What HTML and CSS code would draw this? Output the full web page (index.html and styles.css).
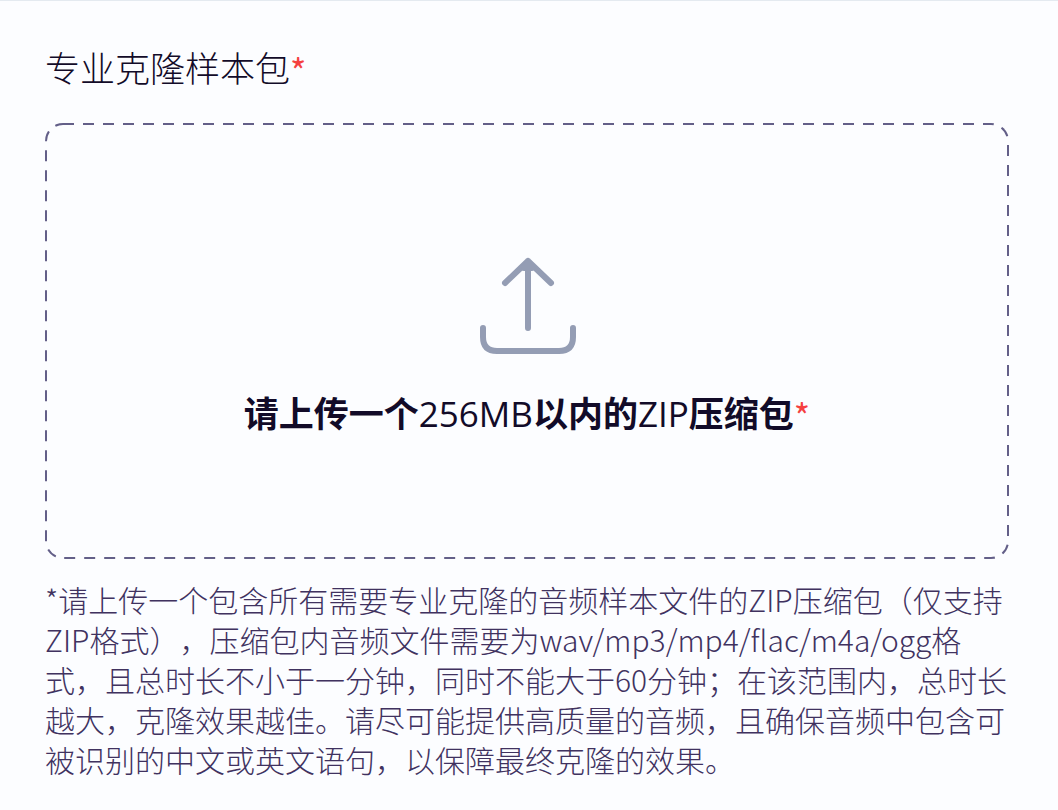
FILE: index.html
```html
<!DOCTYPE html>
<html lang="zh-CN">
<head>
  <meta charset="UTF-8">
  <meta name="viewport" content="width=device-width, initial-scale=1">
  <title>专业克隆样本包</title>
  <link rel="stylesheet" href="styles.css">
</head>
<body>
  <form class="upload-form">
    <h1 class="upload-title">专业克隆样本包<span class="required">*</span></h1>

    <input class="file-input" type="file" id="samplePack" accept=".zip" required aria-describedby="sampleHelp">
    <label class="dropzone" for="samplePack">
      <svg class="upload-icon" width="100" height="100" viewBox="0 0 100 100" fill="none" stroke-linecap="round" stroke-linejoin="round" aria-hidden="true">
        <path d="M28 27 L51 5 L74 27 M51 5 V72" />
        <path d="M6 72 V81 Q6 95 20 95 H82 Q96 95 96 81 V72" />
        <path class="tip" d="M47 12 L51 8 L55 12 Z" />
      </svg>
      <span class="dropzone-text"><b>请上传一个</b>256MB<b>以内的</b>ZIP<b>压缩包</b><span class="required">*</span></span>
    </label>

    <p class="help" id="sampleHelp">*请上传一个包含所有需要专业克隆的音频样本文件的ZIP压缩包（仅支持ZIP格式），压缩包内音频文件需要为wav/mp3/mp4/flac/m4a/ogg格式，且总时长不小于一分钟，同时不能大于60分钟；在该范围内，总时长越大，克隆效果越佳。请尽可能提供高质量的音频，且确保音频中包含可被识别的中文或英文语句，以保障最终克隆的效果。</p>
  </form>
</body>
</html>
```

FILE: styles.css
```css
* {
  box-sizing: border-box;
}
body {
  margin: 0;
  background: #fcfdff;
  border-top: 1px solid #e4eaf0;
  font-family: "Noto Sans CJK SC", sans-serif;
  font-weight: 300;
  color: #120b28;
  text-spacing-trim: space-all;
}
.upload-form {
  padding: 40px 49px 24px 45px;
}
.upload-title {
  margin: 0 0 30px;
  font-size: 35px;
  line-height: 52px;
  font-weight: 300;
}
.required {
  color: #f5403f;
  font-weight: 400;
  vertical-align: -3px;
  line-height: 1;
}
.file-input {
  position: absolute;
  opacity: 0;
  pointer-events: none;
}
/* long dashes, drawn by an svg rect because border-style: dashed is too short */
.dropzone {
  display: flex;
  flex-direction: column;
  align-items: center;
  gap: 30px;
  padding: 133px 20px 119px;
  border-radius: 18px;
  background: url("data:image/svg+xml,%3Csvg xmlns='http://www.w3.org/2000/svg' width='100%25' height='100%25'%3E%3Crect width='100%25' height='100%25' rx='18' fill='none' stroke='%23635f88' stroke-width='4' stroke-dasharray='11 9'/%3E%3C/svg%3E");
  cursor: pointer;
}
.upload-icon {
  stroke: #949db4;
  stroke-width: 6px;
}
.tip {
  fill: #949db4;
}
.dropzone-text {
  font-family: "Open Sans", "Noto Sans CJK SC", sans-serif;
  font-size: 35px;
  line-height: 52px;
  font-weight: 400;
}
.dropzone-text b,
.dropzone-text .required {
  font-family: "Noto Sans CJK SC", sans-serif;
}
.dropzone-text b {
  font-weight: 700;
}
.help {
  margin: 20px 0 0;
  font-size: 30px;
  line-height: 40px;
  color: #40325f;
}
```
